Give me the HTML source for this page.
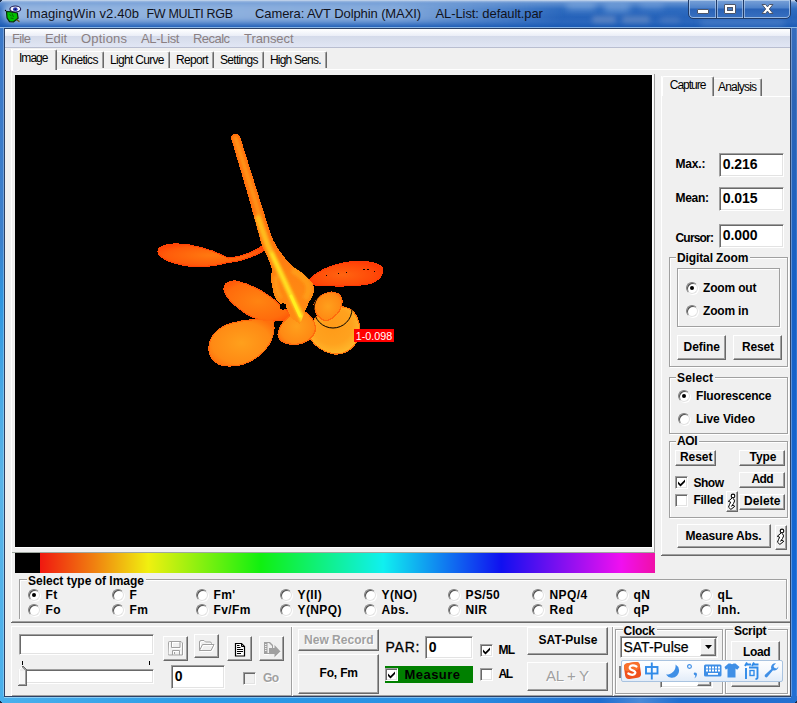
<!DOCTYPE html>
<html><head><meta charset="utf-8">
<style>
*{box-sizing:border-box;margin:0;padding:0}
html,body{width:797px;height:703px;overflow:hidden;background:#3f97dd}
body{font-family:"Liberation Sans",sans-serif;font-size:12px;color:#000;position:relative}
.a{position:absolute}
.t{position:absolute;white-space:nowrap;line-height:1}
.tt{top:8px;font-size:13px;color:#10121c}
.btn{position:absolute;background:#f0f0f0;border:1px solid;border-color:#fff #696969 #696969 #fff;box-shadow:inset -1px -1px 0 #a0a0a0, inset 1px 1px 0 #f0f0f0}
.edit{position:absolute;background:#fff;border:1px solid;border-color:#a0a0a0 #fff #fff #a0a0a0;box-shadow:inset 1px 1px 0 #696969, inset -1px -1px 0 #e3e3e3}
.grp{position:absolute;border:1px solid #a0a0a0;box-shadow:1px 1px 0 #fff, inset 1px 1px 0 #fff}
.rad{position:absolute;width:12px;height:12px;border-radius:50%;background:#fff;border:1px solid;border-color:#808080 #e3e3e3 #e3e3e3 #808080;box-shadow:inset 1px 1px 0 #505050, 1px 1px 0 #fff}
.rad.on:after{content:"";position:absolute;left:3px;top:3px;width:4px;height:4px;background:#000;border-radius:50%}
.chk{position:absolute;width:13px;height:13px;background:#fff;border:1px solid;border-color:#a0a0a0 #fff #fff #a0a0a0;box-shadow:inset 1px 1px 0 #696969, inset -1px -1px 0 #e3e3e3}
.dis{color:#a0a0a0;text-shadow:1px 1px 0 #fff}
.gl{background:#f0f0f0;padding:0 2px 0 1px;margin-left:-1px}
</style></head><body>
<div class="a" style="left:0px;top:0px;width:797px;height:703px;background:#3a80d0"></div>
<div class="a" style="left:0px;top:0px;width:5px;height:703px;background:linear-gradient(180deg,#4a7fc6 0,#3b78c8 30px,#3c80cc 240px,#2f96e0 300px,#4aaae6 400px,#5ab4e8 480px,#4ab0ec 703px)"></div>
<div class="a" style="left:3px;top:28px;width:1px;height:669px;background:rgba(255,255,255,.28)"></div>
<div class="a" style="left:790px;top:0px;width:7px;height:703px;background:linear-gradient(180deg,#3a70c0 0,#2c64b6 100px,#1560c6 300px,#1467d4 600px,#2270d4 703px)"></div>
<div class="a" style="left:791px;top:28px;width:1px;height:669px;background:rgba(255,255,255,.3)"></div>
<div class="a" style="left:796px;top:20px;width:1px;height:683px;background:rgba(255,255,255,.12)"></div>
<div class="a" style="left:0px;top:696px;width:797px;height:7px;background:linear-gradient(90deg,#4ab0ec 0,#2b9be6 200px,#2a8fe2 450px,#1f6ed0 600px,#4a8ad8 640px,#1f6ed0 680px,#2470d0 797px)"></div>
<div class="a" style="left:4px;top:697px;width:787px;height:1px;background:rgba(255,255,255,.4)"></div>
<div class="a" style="left:0px;top:0px;width:797px;height:28px;background:linear-gradient(180deg,#dfe8f4 0,#9cb9e0 1px,#5f8fd0 3px,#2f6cc0 9px,#2663ba 17px,#2a66bc 22px,#1c5cb6 26.500px,#8ab6e6 27px,#8ab6e6 28px)"></div>
<div class="a" style="left:2px;top:3px;width:560px;height:20px;border-radius:10px;background:linear-gradient(90deg,rgba(178,202,233,.8) 0,rgba(165,194,230,.75) 70%,rgba(130,170,220,.35) 90%,rgba(100,150,210,0) 100%);filter:blur(3px)"></div>
<div class="a" style="left:566px;top:2px;width:30px;height:8px;border-radius:4px;background:rgba(150,185,230,.5);filter:blur(3px)"></div>
<div class="a" style="left:604px;top:3px;width:26px;height:9px;border-radius:4px;background:rgba(150,185,230,.5);filter:blur(3px)"></div>
<div class="a" style="left:640px;top:2px;width:24px;height:7px;border-radius:4px;background:rgba(140,178,228,.4);filter:blur(3px)"></div>
<div class="a" style="left:592px;top:16px;width:24px;height:7px;border-radius:3px;background:rgba(130,155,200,.55);filter:blur(2.500px)"></div>
<div class="a" style="left:622px;top:16px;width:28px;height:7px;border-radius:3px;background:rgba(130,155,200,.5);filter:blur(2.500px)"></div>
<div class="a" style="left:660px;top:17px;width:20px;height:6px;border-radius:3px;background:rgba(120,150,200,.35);filter:blur(2.500px)"></div>
<div class="a" style="left:700px;top:20px;width:85px;height:6px;border-radius:3px;background:rgba(120,160,215,.4);filter:blur(3px)"></div>
<div class="a" style="left:0px;top:0px;width:2px;height:1px;background:#1a2c4a"></div>
<div class="a" style="left:0px;top:1px;width:1px;height:1px;background:#1a2c4a"></div>
<div class="a" style="left:795px;top:0px;width:2px;height:1px;background:#1a2c4a"></div>
<div class="a" style="left:796px;top:1px;width:1px;height:1px;background:#1a2c4a"></div>
<div class="a" style="left:0px;top:702px;width:2px;height:1px;background:#1a2c4a"></div>
<div class="a" style="left:0px;top:701px;width:1px;height:1px;background:#1a2c4a"></div>
<div class="a" style="left:795px;top:702px;width:2px;height:1px;background:#1a2c4a"></div>
<div class="a" style="left:796px;top:701px;width:1px;height:1px;background:#1a2c4a"></div>
<div class="a" style="left:4px;top:28px;width:787px;height:669px;background:#2b4166"></div>
<div class="a" style="left:5px;top:29px;width:785px;height:667px;background:#f0f0f0"></div>
<div class="t " style="left:26.0px;top:6.7px;font-size:13px;letter-spacing:0.11px;font-weight:normal;color:#10121c;">ImagingWin v2.40b</div>
<div class="t " style="left:146.5px;top:8.0px;font-size:12.5px;letter-spacing:-0.32px;font-weight:normal;color:#10121c;">FW MULTI RGB</div>
<div class="t " style="left:255.0px;top:6.7px;font-size:13px;letter-spacing:-0.10px;font-weight:normal;color:#10121c;">Camera: AVT Dolphin (MAXI)</div>
<div class="t " style="left:435.5px;top:6.7px;font-size:13px;letter-spacing:-0.09px;font-weight:normal;color:#10121c;">AL-List: default.par</div>
<div class="a" style="left:688px;top:-1px;width:103px;height:20px;border:1px solid #1f3a68;border-radius:0 0 5px 5px;box-shadow:inset 0 0 0 1px rgba(190,212,240,.7);background:linear-gradient(180deg,#7aa2d8 0,#4e82ca 8px,#2a62b6 9px,#3a72c2 19px)"></div>
<div class="a" style="left:716px;top:0px;width:1px;height:18px;background:#1f3a68;box-shadow:1px 0 0 rgba(190,212,240,.6),-1px 0 0 rgba(190,212,240,.6)"></div>
<div class="a" style="left:743px;top:0px;width:1px;height:18px;background:#1f3a68;box-shadow:1px 0 0 rgba(190,212,240,.6),-1px 0 0 rgba(190,212,240,.6)"></div>
<div class="a" style="left:697px;top:9px;width:12px;height:5px;background:#fff;border:1px solid #4d566a;border-radius:1px"></div>
<div class="a" style="left:724px;top:4px;width:12px;height:10px;background:#fff;border:1px solid #4d566a;border-radius:1px"></div>
<div class="a" style="left:727px;top:7px;width:6px;height:4px;background:#4c7cc0;border:1px solid #4d566a"></div>
<svg class="a" style="left:760px;top:3px" width="15" height="12" viewBox="0 0 15 12"><path d="M2 1.500h3.600l1.900 2.400 1.900-2.400h3.600l-3.700 4.500 3.700 4.500h-3.600l-1.900-2.400-1.900 2.400h-3.600l3.700-4.500z" fill="#fff" stroke="#4d566a" stroke-width="1" stroke-linejoin="round"/></svg>
<svg class="a" style="left:4px;top:5px" width="19" height="19" viewBox="4 5 19 19"><path d="M6.500 11.500l5 .3 5.800 1.200.8 5.200-4.800 3.800-3.800-.4-2.500-3.800z" fill="#00c000" stroke="#062a06" stroke-width="1.200" stroke-linejoin="round"/><path d="M9.500 14.500l2 1.500M12 13.500l1.500 3.500M10.500 18l3 .5" stroke="#0a5a0a" stroke-width=".9" fill="none"/><path d="M16.500 19.800l3 1.800" stroke="#6a5010" stroke-width="1.300"/><circle cx="5.500" cy="10.500" r=".7" fill="#000"/><ellipse cx="15.300" cy="9" rx="5.400" ry="3" fill="#f4f4fc" stroke="#1c1850" stroke-width="1.100"/><ellipse cx="15.300" cy="9.200" rx="2.300" ry="1.900" fill="#2838b8"/><circle cx="15.300" cy="9.300" r=".8" fill="#10103a"/></svg>
<div class="a" style="left:5px;top:29px;width:785px;height:19px;background:linear-gradient(180deg,#fff 0,#f6f8fc 3px,#eaedf6 7px,#d4daea 7px,#dae0ee 12px,#e1e6f4 18px,#b9bed0 18px,#b9bed0 19px)"></div>
<div class="t " style="left:12.0px;top:32.0px;font-size:13px;letter-spacing:-0.65px;font-weight:normal;color:#8a7f82;">File</div>
<div class="t " style="left:45.0px;top:32.0px;font-size:13px;letter-spacing:-0.13px;font-weight:normal;color:#8a7f82;">Edit</div>
<div class="t " style="left:81.0px;top:32.0px;font-size:13px;letter-spacing:0.20px;font-weight:normal;color:#8a7f82;">Options</div>
<div class="t " style="left:141.0px;top:32.0px;font-size:13px;letter-spacing:-0.33px;font-weight:normal;color:#8a7f82;">AL-List</div>
<div class="t " style="left:193.0px;top:32.0px;font-size:13px;letter-spacing:-0.55px;font-weight:normal;color:#8a7f82;">Recalc</div>
<div class="t " style="left:244.0px;top:32.0px;font-size:13px;letter-spacing:-0.08px;font-weight:normal;color:#8a7f82;">Transect</div>
<div class="a" style="left:11px;top:69px;width:779px;height:1px;background:#fff"></div>
<div class="a" style="left:11px;top:49px;width:1px;height:574px;background:#fff"></div>
<div class="a" style="left:11px;top:622px;width:779px;height:1px;background:#696969"></div>
<div class="a" style="left:12px;top:621px;width:778px;height:1px;background:#a0a0a0"></div>
<div class="a" style="left:12px;top:49px;width:45px;height:21px;background:#f0f0f0;border-top:1px solid #fff;border-left:1px solid #fff;border-right:1px solid #696969;box-shadow:inset -1px 0 0 #a0a0a0;border-radius:2px 2px 0 0"></div>
<div class="t " style="left:19.0px;top:52.1px;font-size:12px;letter-spacing:-0.96px;font-weight:normal;">Image</div>
<div class="a" style="left:57px;top:51px;width:47px;height:17px;border-top:1px solid #fff;border-right:1px solid #696969;box-shadow:inset -1px 0 0 #a0a0a0;border-radius:0 2px 0 0"></div>
<div class="t " style="left:61.0px;top:53.8px;font-size:12px;letter-spacing:-0.65px;font-weight:normal;">Kinetics</div>
<div class="a" style="left:104px;top:51px;width:66px;height:17px;border-top:1px solid #fff;border-right:1px solid #696969;box-shadow:inset -1px 0 0 #a0a0a0;border-radius:0 2px 0 0"></div>
<div class="t " style="left:110.0px;top:53.8px;font-size:12px;letter-spacing:-0.69px;font-weight:normal;">Light Curve</div>
<div class="a" style="left:170px;top:51px;width:44px;height:17px;border-top:1px solid #fff;border-right:1px solid #696969;box-shadow:inset -1px 0 0 #a0a0a0;border-radius:0 2px 0 0"></div>
<div class="t " style="left:176.0px;top:53.8px;font-size:12px;letter-spacing:-0.70px;font-weight:normal;">Report</div>
<div class="a" style="left:214px;top:51px;width:50px;height:17px;border-top:1px solid #fff;border-right:1px solid #696969;box-shadow:inset -1px 0 0 #a0a0a0;border-radius:0 2px 0 0"></div>
<div class="t " style="left:220.0px;top:53.8px;font-size:12px;letter-spacing:-0.69px;font-weight:normal;">Settings</div>
<div class="a" style="left:264px;top:51px;width:63px;height:17px;border-top:1px solid #fff;border-right:1px solid #696969;box-shadow:inset -1px 0 0 #a0a0a0;border-radius:0 2px 0 0"></div>
<div class="t " style="left:270.0px;top:53.8px;font-size:12px;letter-spacing:-0.80px;font-weight:normal;">High Sens.</div>
<div class="a" style="left:654px;top:74px;width:1px;height:479px;background:#a0a0a0"></div>
<div class="a" style="left:12px;top:552px;width:643px;height:1px;background:#a0a8a0"></div>
<div class="a" style="left:652px;top:75px;width:1px;height:473px;background:#fff"></div>
<div class="a" style="left:15px;top:547px;width:638px;height:1px;background:#fff"></div>
<div class="a" style="left:653px;top:75px;width:1px;height:477px;background:#f8f8f8"></div>
<div class="a" style="left:15px;top:75px;width:637px;height:472px;background:#000"></div>
<svg class="a" style="left:15px;top:75px" width="637" height="472" viewBox="15 75 637 472" shape-rendering="crispEdges">
<defs>
<radialGradient id="gL" cx="50%" cy="50%" r="60%"><stop offset="0" stop-color="#ff7a10"/><stop offset=".7" stop-color="#ff5c0a"/><stop offset="1" stop-color="#ff4205"/></radialGradient>
<radialGradient id="gR" cx="45%" cy="55%" r="60%"><stop offset="0" stop-color="#ff6410"/><stop offset=".7" stop-color="#ff4a08"/><stop offset="1" stop-color="#ff3a05"/></radialGradient>
<radialGradient id="gM" cx="50%" cy="50%" r="60%"><stop offset="0" stop-color="#ff8412"/><stop offset=".8" stop-color="#ff6c0c"/><stop offset="1" stop-color="#ff5a08"/></radialGradient>
<radialGradient id="gB" cx="50%" cy="50%" r="60%"><stop offset="0" stop-color="#ffa01c"/><stop offset=".75" stop-color="#ff8a14"/><stop offset="1" stop-color="#ff700c"/></radialGradient>
<radialGradient id="gY" cx="45%" cy="40%" r="65%"><stop offset="0" stop-color="#ff9a18"/><stop offset=".6" stop-color="#ffa21e"/><stop offset=".9" stop-color="#ffb62a"/><stop offset="1" stop-color="#ff9018"/></radialGradient>
<linearGradient id="gS" x1="0" y1="0" x2="1" y2="0"><stop offset="0" stop-color="#ff5a08"/><stop offset=".5" stop-color="#ff8c14"/><stop offset="1" stop-color="#ff5a08"/></linearGradient>
<filter id="bl" x="-20%" y="-20%" width="140%" height="140%"><feGaussianBlur stdDeviation="1.6"/></filter>
<linearGradient id="gS2" gradientUnits="userSpaceOnUse" x1="235" y1="134" x2="300" y2="324"><stop offset="0" stop-color="#ff6c0c"/><stop offset=".55" stop-color="#ff720e"/><stop offset=".75" stop-color="#ff8412"/><stop offset="1" stop-color="#ff8c14"/></linearGradient>
<clipPath id="cb"><path d="M231 138Q231 134 235.500 134Q240 134 240.500 138L259 197L271 235Q277 250 292 266Q307 275 313 284Q316 293 309 302L304 314L300 324L291 318Q288 306 279 303Q273 296 272.500 288Q270 278 272 270Q268 256 262 246L248.500 197Z"/></clipPath>
</defs>
<!-- left leaf + petiole -->
<path d="M158 251Q159 244 178 244Q203 245 228 258Q246 257 262 246L265 250Q246 261 228 262.500Q200 270 178 264Q158 259 158 251Z" fill="url(#gL)" stroke="#ff4606" stroke-width="1.200"/>
<!-- left-middle leaf -->
<path d="M224 289Q224 281 236 281Q262 287 282 307L292 314L292 320L283 320Q262 324 245 313Q225 299 224 289Z" fill="url(#gM)" stroke="#ff560a" stroke-width="1.200"/>
<!-- bottom-left leaf -->
<path d="M209 350Q208 334 226 325Q250 317 273 321Q277 335 265 350Q250 366 230 366Q211 366 209 350Z" fill="url(#gB)" stroke="#ff6a0c" stroke-width="1.200"/>
<!-- right leaf -->
<path d="M310 279Q322 267 345 262.500Q372 259 382 267Q385 277 372 283Q360 286 340 286L316 285.500Q310 283 310 279Z" fill="url(#gR)" stroke="#ff3c06" stroke-width="1.200"/>
<!-- big right-bottom leaf -->
<path d="M310 338Q308 322 322 312Q340 302 353 311Q363 324 358 339Q350 355 334 354Q318 351 310 338Z" fill="url(#gY)" stroke="#ff7a10" stroke-width="1.200"/>
<!-- small leaf under circle -->
<path d="M314 304Q318 294 331 292Q343 293 342 303Q340 316 326 321Q315 318 314 304Z" fill="url(#gB)" stroke="#ff6a0c" stroke-width="1.200"/>
<!-- centre-bottom leaf -->
<path d="M278 335Q279 324 290 316L298 308L308 314Q317 322 315 332Q309 344 294 344.500Q280 344 278 335Z" fill="url(#gB)" stroke="#ff6a0c" stroke-width="1.200"/>
<!-- stem + body -->
<path d="M231 138Q231 134 235.500 134Q240 134 240.500 138L259 197L271 235Q277 250 292 266Q307 275 313 284Q316 293 309 302L304 314L300 324L291 318Q288 306 279 303Q273 296 272.500 288Q270 278 272 270Q268 256 262 246L248.500 197Z" fill="url(#gS2)"/>
<!-- stem highlight -->
<g clip-path="url(#cb)"><g filter="url(#bl)" shape-rendering="auto">
<path d="M235.500 138L254 197L267 242L283 278L295 304L304 322" fill="none" stroke="#ff9416" stroke-width="4.500" stroke-linecap="round"/>
<path d="M258 218L268 246L283 278L295 304L303 320" fill="none" stroke="#ffbc1c" stroke-width="6" stroke-linecap="round"/>
<path d="M272 254L283 278L295 304L303 320" fill="none" stroke="#ffe420" stroke-width="4" stroke-linecap="round"/>
<path d="M292 270Q302 275 308 284Q310 292 305 299" fill="none" stroke="#ff9c18" stroke-width="6"/>
<path d="M276 276Q275 290 281 298" fill="none" stroke="#ff9a18" stroke-width="4"/>
</g></g>
<path d="M291 296L300 316" fill="none" stroke="#fff020" stroke-width="3" stroke-linecap="round" shape-rendering="auto"/>
<circle cx="283" cy="306.500" r="3.200" fill="#000"/>
<!-- dots on right leaf -->
<g fill="#000"><rect x="338" y="273" width="1" height="1"/><rect x="346" y="272" width="1" height="1"/><rect x="363" y="269" width="2" height="1"/><rect x="367" y="269" width="2" height="1"/><rect x="374" y="271" width="1" height="1"/><rect x="326" y="275" width="1" height="1"/></g>
<!-- AOI circle -->
<circle cx="333" cy="309" r="19" fill="none" stroke="#000" stroke-width="1" shape-rendering="auto"/>
<!-- label -->
<rect x="354" y="329" width="40" height="13" fill="#ff0000"/>
<text x="355.800" y="339.800" font-family="Liberation Sans, sans-serif" font-size="11" fill="#fff" textLength="36.500" shape-rendering="auto" lengthAdjust="spacingAndGlyphs">1-0.098</text>
</svg>

<div class="a" style="left:15px;top:553px;width:25px;height:20px;background:#000"></div>
<div class="a" style="left:40px;top:553px;width:615px;height:20px;background:linear-gradient(90deg,#f01810 0,#f08010 8.8%,#f0f010 17.6%,#80f010 26.7%,#10f010 35.9%,#10f080 45.8%,#10f0f0 55.8%,#1080f0 65.4%,#1010f0 75%,#8010f0 84.7%,#f010f0 94.5%,#f010a8 100%)"></div>
<div class="a" style="left:714px;top:96px;width:76px;height:1px;background:#fff"></div>
<div class="a" style="left:661px;top:76px;width:1px;height:480px;background:#fff"></div>
<div class="a" style="left:661px;top:555px;width:129px;height:1px;background:#696969"></div>
<div class="a" style="left:662px;top:554px;width:128px;height:1px;background:#a0a0a0"></div>
<div class="a" style="left:662px;top:76px;width:52px;height:20px;background:#f0f0f0;border-top:1px solid #fff;border-left:1px solid #fff;border-right:1px solid #696969;box-shadow:inset -1px 0 0 #a0a0a0;border-radius:2px 2px 0 0"></div>
<div class="t " style="left:669.8px;top:78.8px;font-size:12px;letter-spacing:-1.03px;font-weight:normal;">Capture</div>
<div class="a" style="left:714px;top:78px;width:48px;height:18px;border-top:1px solid #fff;border-right:1px solid #696969;box-shadow:inset -1px 0 0 #a0a0a0;border-radius:0 2px 0 0"></div>
<div class="t " style="left:718.0px;top:80.8px;font-size:12px;letter-spacing:-0.81px;font-weight:normal;">Analysis</div>
<div class="t " style="left:675.5px;top:157.8px;font-size:12px;letter-spacing:-0.17px;font-weight:bold;">Max.:</div>
<div class="t " style="left:675.5px;top:191.8px;font-size:12px;letter-spacing:-0.29px;font-weight:bold;">Mean:</div>
<div class="t " style="left:675.5px;top:231.8px;font-size:12px;letter-spacing:-0.81px;font-weight:bold;">Cursor:</div>
<div class="edit" style="left:719px;top:153px;width:65px;height:24px;"></div>
<div class="t " style="left:722.7px;top:156.8px;font-size:14px;letter-spacing:-0.06px;font-weight:bold;">0.216</div>
<div class="edit" style="left:719px;top:187px;width:65px;height:24px;"></div>
<div class="t " style="left:722.7px;top:190.8px;font-size:14px;letter-spacing:-0.06px;font-weight:bold;">0.015</div>
<div class="edit" style="left:719px;top:224px;width:65px;height:24px;"></div>
<div class="t " style="left:722.7px;top:227.8px;font-size:14px;letter-spacing:-0.06px;font-weight:bold;">0.000</div>
<div class="grp" style="left:669px;top:257px;width:119px;height:110px;"></div>
<div class="t gl" style="left:677.0px;top:251.8px;font-size:12px;letter-spacing:-0.11px;font-weight:bold;">Digital Zoom</div>
<div class="grp" style="left:677px;top:268px;width:103px;height:59px;"></div>
<div class="rad on" style="left:686px;top:282px"></div>
<div class="t " style="left:703.0px;top:281.8px;font-size:12px;letter-spacing:-0.16px;font-weight:bold;">Zoom out</div>
<div class="rad" style="left:686px;top:305px"></div>
<div class="t " style="left:703.0px;top:304.8px;font-size:12px;letter-spacing:-0.19px;font-weight:bold;">Zoom in</div>
<div class="btn" style="left:677px;top:335px;width:49px;height:25px;"></div>
<div class="t " style="left:683.5px;top:340.8px;font-size:12px;letter-spacing:-0.03px;font-weight:bold;">Define</div>
<div class="btn" style="left:733px;top:335px;width:49px;height:25px;"></div>
<div class="t " style="left:742.0px;top:340.8px;font-size:12px;letter-spacing:-0.17px;font-weight:bold;">Reset</div>
<div class="grp" style="left:669px;top:377px;width:119px;height:57px;"></div>
<div class="t gl" style="left:677.0px;top:371.8px;font-size:12px;letter-spacing:0.13px;font-weight:bold;">Select</div>
<div class="rad on" style="left:678px;top:390px"></div>
<div class="t " style="left:696.0px;top:389.8px;font-size:12px;letter-spacing:-0.17px;font-weight:bold;">Fluorescence</div>
<div class="rad" style="left:678px;top:413px"></div>
<div class="t " style="left:696.0px;top:412.8px;font-size:12px;letter-spacing:-0.09px;font-weight:bold;">Live Video</div>
<div class="grp" style="left:669px;top:441px;width:119px;height:77px;"></div>
<div class="t gl" style="left:677.0px;top:435.3px;font-size:12px;letter-spacing:-0.42px;font-weight:bold;">AOI</div>
<div class="btn" style="left:675px;top:450px;width:41px;height:16px;"></div>
<div class="t " style="left:680.0px;top:450.8px;font-size:12px;letter-spacing:-0.05px;font-weight:bold;">Reset</div>
<div class="btn" style="left:739px;top:450px;width:46px;height:16px;"></div>
<div class="t " style="left:749.5px;top:450.8px;font-size:12px;letter-spacing:-0.04px;font-weight:bold;">Type</div>
<div class="btn" style="left:739px;top:472px;width:46px;height:16px;"></div>
<div class="t " style="left:751.5px;top:472.8px;font-size:12px;letter-spacing:-0.66px;font-weight:bold;">Add</div>
<div class="btn" style="left:739px;top:494px;width:46px;height:16px;"></div>
<div class="t " style="left:744.0px;top:494.8px;font-size:12px;letter-spacing:0.10px;font-weight:bold;">Delete</div>
<div class="chk" style="left:675px;top:476px;"><svg width="13" height="13" viewBox="0 0 13 13" style="position:absolute;left:-1px;top:-1px"><path d="M3 5.5l2.5 2.5 4.5-4.5v2.6l-4.5 4.5-2.5-2.5z" fill="#000"/></svg></div>
<div class="t " style="left:693.5px;top:476.8px;font-size:12px;letter-spacing:-0.50px;font-weight:bold;">Show</div>
<div class="chk" style="left:675px;top:494px;"></div>
<div class="t " style="left:693.5px;top:494.3px;font-size:12px;letter-spacing:-0.27px;font-weight:bold;">Filled</div>
<div class="btn" style="left:726px;top:491px;width:12px;height:21px;"></div>
<svg class="a" style="left:726px;top:491px" width="12" height="21" viewBox="0 0 12 21"><circle cx="7" cy="4.900" r="1.800" fill="#fff" stroke="#000" stroke-width="1.100"/><path d="M6.400 6.800L2.300 10.300L4.700 11.200L3.600 13.300L2.500 16.200L4.900 18.400L8.800 15.300L6.700 14.200L5.600 15.300L7.500 12.500L8.600 9.900L7.500 7.700Z" fill="#fff" stroke="#000" stroke-width="1" stroke-linejoin="round"/></svg>
<div class="btn" style="left:677px;top:524px;width:94px;height:24px;"></div>
<div class="t " style="left:685.5px;top:529.8px;font-size:12px;letter-spacing:-0.14px;font-weight:bold;">Measure Abs.</div>
<div class="btn" style="left:775px;top:525px;width:12px;height:25px;"></div>
<svg class="a" style="left:775px;top:526px" width="12" height="21" viewBox="0 0 12 21"><circle cx="7" cy="4.900" r="1.800" fill="#fff" stroke="#000" stroke-width="1.100"/><path d="M6.400 6.800L2.300 10.300L4.700 11.200L3.600 13.300L2.500 16.200L4.900 18.400L8.800 15.300L6.700 14.200L5.600 15.300L7.500 12.500L8.600 9.900L7.500 7.700Z" fill="#fff" stroke="#000" stroke-width="1" stroke-linejoin="round"/></svg>
<div class="a" style="left:19px;top:579px;width:768px;height:40px;border:1px solid #a0a0a0;border-bottom:none;box-shadow:1px 0 0 #fff, inset 1px 1px 0 #fff"></div>
<div class="t gl" style="left:28.0px;top:574.8px;font-size:12px;letter-spacing:-0.00px;font-weight:bold;">Select type of Image</div>
<div class="rad on" style="left:28px;top:589px"></div>
<div class="t " style="left:45.5px;top:589.1px;font-size:12px;font-weight:bold;letter-spacing:.4px;">Ft</div>
<div class="rad" style="left:28px;top:604px"></div>
<div class="t " style="left:45.5px;top:604.1px;font-size:12px;font-weight:bold;letter-spacing:.4px;">Fo</div>
<div class="rad" style="left:112px;top:589px"></div>
<div class="t " style="left:129.5px;top:589.1px;font-size:12px;font-weight:bold;letter-spacing:.4px;">F</div>
<div class="rad" style="left:112px;top:604px"></div>
<div class="t " style="left:129.5px;top:604.1px;font-size:12px;font-weight:bold;letter-spacing:.4px;">Fm</div>
<div class="rad" style="left:196px;top:589px"></div>
<div class="t " style="left:213.5px;top:589.1px;font-size:12px;font-weight:bold;letter-spacing:.4px;">Fm'</div>
<div class="rad" style="left:196px;top:604px"></div>
<div class="t " style="left:213.5px;top:604.1px;font-size:12px;font-weight:bold;letter-spacing:.4px;">Fv/Fm</div>
<div class="rad" style="left:280px;top:589px"></div>
<div class="t " style="left:297.5px;top:589.1px;font-size:12px;font-weight:bold;letter-spacing:.4px;">Y(II)</div>
<div class="rad" style="left:280px;top:604px"></div>
<div class="t " style="left:297.5px;top:604.1px;font-size:12px;font-weight:bold;letter-spacing:.4px;">Y(NPQ)</div>
<div class="rad" style="left:364px;top:589px"></div>
<div class="t " style="left:381.5px;top:589.1px;font-size:12px;font-weight:bold;letter-spacing:.4px;">Y(NO)</div>
<div class="rad" style="left:364px;top:604px"></div>
<div class="t " style="left:381.5px;top:604.1px;font-size:12px;font-weight:bold;letter-spacing:.4px;">Abs.</div>
<div class="rad" style="left:448px;top:589px"></div>
<div class="t " style="left:465.5px;top:589.1px;font-size:12px;font-weight:bold;letter-spacing:.4px;">PS/50</div>
<div class="rad" style="left:448px;top:604px"></div>
<div class="t " style="left:465.5px;top:604.1px;font-size:12px;font-weight:bold;letter-spacing:.4px;">NIR</div>
<div class="rad" style="left:532px;top:589px"></div>
<div class="t " style="left:549.5px;top:589.1px;font-size:12px;font-weight:bold;letter-spacing:.4px;">NPQ/4</div>
<div class="rad" style="left:532px;top:604px"></div>
<div class="t " style="left:549.5px;top:604.1px;font-size:12px;font-weight:bold;letter-spacing:.4px;">Red</div>
<div class="rad" style="left:616px;top:589px"></div>
<div class="t " style="left:633.5px;top:589.1px;font-size:12px;font-weight:bold;letter-spacing:.4px;">qN</div>
<div class="rad" style="left:616px;top:604px"></div>
<div class="t " style="left:633.5px;top:604.1px;font-size:12px;font-weight:bold;letter-spacing:.4px;">qP</div>
<div class="rad" style="left:700px;top:589px"></div>
<div class="t " style="left:717.5px;top:589.1px;font-size:12px;font-weight:bold;letter-spacing:.4px;">qL</div>
<div class="rad" style="left:700px;top:604px"></div>
<div class="t " style="left:717.5px;top:604.1px;font-size:12px;font-weight:bold;letter-spacing:.4px;">Inh.</div>
<div class="a" style="left:11px;top:626px;width:779px;height:1px;background:#fff"></div>
<div class="a" style="left:11px;top:695px;width:779px;height:1px;background:#a0a0a0"></div>
<div class="a" style="left:11px;top:626px;width:1px;height:70px;background:#fff"></div>
<div class="a" style="left:291px;top:627px;width:1px;height:69px;background:#a0a0a0"></div>
<div class="a" style="left:292px;top:627px;width:1px;height:69px;background:#fff"></div>
<div class="a" style="left:612px;top:627px;width:1px;height:69px;background:#a0a0a0"></div>
<div class="a" style="left:613px;top:627px;width:1px;height:69px;background:#fff"></div>
<div class="edit" style="left:19px;top:634px;width:135px;height:21px;"></div>
<div class="a" style="left:22px;top:661px;width:1px;height:4px;background:#000"></div>
<div class="a" style="left:149px;top:661px;width:1px;height:4px;background:#000"></div>
<div class="edit" style="left:24px;top:669px;width:130px;height:15px;"></div>
<svg class="a" style="left:18px;top:665px" width="10" height="21" viewBox="0 0 10 21" shape-rendering="crispEdges"><path d="M0 21v-16l4.500-4.500 4.500 4.500v16z" fill="#ececec"/><path d="M1 20v-15l3.500-3.500" fill="none" stroke="#fff" stroke-width="1"/><path d="M2 6h6v14h-6z" fill="#f6f6f6"/><path d="M4.500 1l4 4v15.500h-8.500" fill="none" stroke="#696969" stroke-width="1"/><path d="M4.500 2l3 3v14.500h-6.500" fill="none" stroke="#a0a0a0" stroke-width="1"/></svg>
<div class="btn" style="left:163px;top:636px;width:25px;height:25px;"></div>
<div class="btn" style="left:194px;top:634px;width:25px;height:24px;"></div>
<div class="btn" style="left:227px;top:636px;width:25px;height:25px;"></div>
<div class="btn" style="left:259px;top:636px;width:25px;height:25px;"></div>
<svg class="a" style="left:168px;top:641px" width="16" height="15" viewBox="0 0 16 15"><g fill="none" stroke="#fff" stroke-width="1" transform="translate(1,1)"><path d="M.5 1.500q0-1 1-1h11.500l1.500 1.500v12h-13.500q-1 0-1-1z"/><path d="M3.500.5v6h8.500v-6M4.500 14v-4.500h7v4.500"/></g><g fill="none" stroke="#a0a0a0" stroke-width="1"><path d="M.5 1.500q0-1 1-1h11.500l1.500 1.500v12h-13.500q-1 0-1-1z"/><path d="M3.500.5v6h8.500v-6M4.500 14v-4.500h7v4.500M6.500 11v2"/></g></svg>
<svg class="a" style="left:199px;top:640px" width="17" height="12" viewBox="0 0 17 12"><g fill="none" stroke="#fff" stroke-width="1" transform="translate(1,1)"><path d="M.5 10.500v-8.500q0-1.500 1.500-1.500h3l1.500 1.500h4.500q1.500 0 1.500 1.500v1M.5 10.500l3-6h11.500l-3 6z"/></g><g fill="none" stroke="#a0a0a0" stroke-width="1"><path d="M.5 10.500v-8.500q0-1.500 1.500-1.500h3l1.500 1.500h4.500q1.500 0 1.500 1.500v1M.5 10.500l3-6h11.500l-3 6z"/></g></svg>
<svg class="a" style="left:234px;top:642px" width="12" height="15" viewBox="234 642 12 15"><path d="M235.500 643.500h6l3 3v9.500h-9z" fill="#fff" stroke="#000" stroke-width="1.200"/><path d="M241.500 643.500v3h3" fill="none" stroke="#000" stroke-width="1"/><path d="M237 645.500h2.500M237 647.500h3.500M237 649.500h6M237 651.500h6M237 653.500h4" stroke="#000" stroke-width="1"/></svg>
<svg class="a" style="left:263px;top:641px" width="19" height="17" viewBox="263 641 19 17"><path d="M264 642h6l3 3v9h-9z" fill="#a0a0a0"/><path d="M267.500 643v10h4.500v-7l-3-3z" fill="#f0f0f0"/><path d="M265 644.500h1.500M265 646.500h1.500M265 648.500h1.500M265 650.500h1.500" stroke="#f0f0f0" stroke-width="1"/><path d="M269 648h5.500v-3l6 6.500-6 6v-3.500h-5.500z" fill="#a0a0a0"/><path d="M264 654.500h5M275 657.500l5.500-5.500" stroke="#fff" stroke-width="1" fill="none"/></svg>

<div class="edit" style="left:171px;top:665px;width:54px;height:24px;"></div>
<div class="t " style="left:174.8px;top:668.7px;font-size:14px;font-weight:bold;">0</div>
<div class="chk" style="left:243px;top:672px;background:#f0f0f0;"></div>
<div class="t dis" style="left:263.0px;top:672.3px;font-size:12px;letter-spacing:-0.66px;font-weight:bold;">Go</div>
<div class="btn" style="left:298px;top:629px;width:81px;height:22px;"></div>
<div class="t dis" style="left:304.0px;top:633.8px;font-size:12px;letter-spacing:0.02px;font-weight:bold;">New Record</div>
<div class="btn" style="left:298px;top:654px;width:81px;height:40px;"></div>
<div class="t " style="left:319.5px;top:667.3px;font-size:12px;letter-spacing:-0.17px;font-weight:bold;">Fo, Fm</div>
<div class="t " style="left:385.5px;top:639.7px;font-size:14px;letter-spacing:0.79px;font-weight:normal;-webkit-text-stroke:.3px #000;">PAR:</div>
<div class="edit" style="left:425px;top:636px;width:48px;height:23px;"></div>
<div class="t " style="left:428.8px;top:639.8px;font-size:14px;font-weight:bold;">0</div>
<div class="a" style="left:385px;top:666px;width:88px;height:17px;background:#008000"></div>
<div class="chk" style="left:385px;top:668px;"><svg width="13" height="13" viewBox="0 0 13 13" style="position:absolute;left:-1px;top:-1px"><path d="M3 5.5l2.5 2.5 4.5-4.5v2.6l-4.5 4.5-2.5-2.5z" fill="#000"/></svg></div>
<div class="t " style="left:404.5px;top:667.6px;font-size:13px;letter-spacing:0.46px;font-weight:bold;">Measure</div>
<div class="chk" style="left:480px;top:644px;"><svg width="13" height="13" viewBox="0 0 13 13" style="position:absolute;left:-1px;top:-1px"><path d="M3 5.5l2.5 2.5 4.5-4.5v2.6l-4.5 4.5-2.5-2.5z" fill="#000"/></svg></div>
<div class="t " style="left:498.5px;top:644.3px;font-size:12px;letter-spacing:-0.83px;font-weight:bold;">ML</div>
<div class="chk" style="left:480px;top:668px;"></div>
<div class="t " style="left:498.5px;top:667.8px;font-size:12px;letter-spacing:-1.50px;font-weight:bold;">AL</div>
<div class="btn" style="left:527px;top:627px;width:81px;height:28px;"></div>
<div class="t " style="left:538.5px;top:633.8px;font-size:12px;letter-spacing:0.07px;font-weight:bold;">SAT-Pulse</div>
<div class="btn" style="left:527px;top:662px;width:81px;height:29px;"></div>
<div class="t dis" style="left:546.0px;top:668.3px;font-size:15px;letter-spacing:-0.32px;font-weight:normal;">AL + Y</div>
<div class="grp" style="left:615px;top:629px;width:108px;height:65px;"></div>
<div class="t gl" style="left:623.5px;top:625.1px;font-size:12px;letter-spacing:-0.29px;font-weight:bold;">Clock</div>
<div class="grp" style="left:725px;top:629px;width:63px;height:65px;"></div>
<div class="t gl" style="left:734.0px;top:625.1px;font-size:12px;letter-spacing:-0.30px;font-weight:bold;">Script</div>
<div class="edit" style="left:620px;top:636px;width:98px;height:22px;"></div>
<div class="t " style="left:623.5px;top:640.1px;font-size:14px;letter-spacing:-0.01px;font-weight:normal;-webkit-text-stroke:.25px #000;">SAT-Pulse</div>
<div class="btn" style="left:700px;top:638px;width:16px;height:18px;"></div>
<svg class="a" style="left:705px;top:645px" width="7" height="4" viewBox="0 0 7 4"><path d="M0 0h7l-3.500 4z" fill="#000"/></svg>
<div class="btn" style="left:731px;top:641px;width:49px;height:21px;"></div>
<div class="t " style="left:743.0px;top:645.8px;font-size:12px;letter-spacing:-0.39px;font-weight:bold;">Load</div>
<div class="edit" style="left:660px;top:668px;width:53px;height:20px;"></div>
<div class="btn" style="left:697px;top:670px;width:14px;height:16px;"></div>
<div class="btn" style="left:731px;top:666px;width:49px;height:21px;"></div>
<div class="a" style="left:619px;top:666px;width:2px;height:12px;background:#808080"></div>
<div class="a" style="left:621px;top:660px;width:162px;height:22px;border:1px solid #a9c3e0;border-radius:2px;background:linear-gradient(180deg,#fdfeff 0,#f4f8fd 50%,#e2ecf8 100%)"></div>
<svg class="a" style="left:622px;top:660px" width="160" height="22" viewBox="622 660 160 22">
<!-- sogou S -->
<g transform="rotate(-8 632.500 670.500)"><rect x="624.500" y="662.500" width="16" height="16" rx="4" fill="#f0501c"/><rect x="624.500" y="662.500" width="16" height="8" rx="4" fill="#f8702c"/></g>
<path d="M636.500 666.500q-3.500-2-6 -.5-2 2 .8 3.700l2.800 1.300q2.500 1.500 .2 3.300-2.800 1.300-6-.8" fill="none" stroke="#fff" stroke-width="2.200" stroke-linecap="round"/>
<!-- zhong -->
<g fill="none" stroke="#2f8ae8" stroke-width="1.900"><rect x="646" y="667" width="11.500" height="6.500"/><path d="M651.800 662.500v17"/></g>
<!-- moon -->
<path d="M675.500 664.500A7.100 7.100 0 1 1 666 674.500A8.700 8.700 0 0 0 675.500 664.500Z" fill="#3f8fe6"/>
<!-- degree comma -->
<circle cx="689.500" cy="666.500" r="1.900" fill="none" stroke="#3f8fe6" stroke-width="1.200"/>
<path d="M695 672.500q2.200 0 2 2.200-.3 2.400-2.800 3.800 1.500-1.800 1-3.200-1.500-.3-1.500-1.500t1.300-1.300z" fill="#3f8fe6"/>
<!-- keyboard -->
<rect x="704" y="664.500" width="17.500" height="12" rx="1.500" fill="#3f8fe6"/>
<g fill="#fff"><rect x="706" y="666.500" width="2" height="2"/><rect x="709" y="666.500" width="2" height="2"/><rect x="712" y="666.500" width="2" height="2"/><rect x="715" y="666.500" width="2" height="2"/><rect x="718" y="666.500" width="2" height="2"/><rect x="706" y="669.500" width="2" height="2"/><rect x="709" y="669.500" width="2" height="2"/><rect x="712" y="669.500" width="2" height="2"/><rect x="715" y="669.500" width="2" height="2"/><rect x="718" y="669.500" width="2" height="2"/><rect x="708" y="673" width="10" height="1.800"/></g>
<!-- shirt -->
<path d="M724.500 667l4-3.500h2q1.500 1.500 3 0h2l4 3.500-2.300 2.800-1.700-1.300v9h-8v-9l-1.700 1.300z" fill="#3f8fe6"/>
<!-- jian -->
<g fill="none" stroke="#2f8ae8" stroke-width="1.900"><path d="M747 662.500l-2 3.500M746.500 664.500h4.500M754 662.500l-2 3.500M753.500 664.500h5"/><path d="M746 668v11M749 667.500h8.500v10q0 1.500-2 1.500"/><rect x="750" y="670.500" width="4" height="5" stroke-width="1.400"/></g>
<!-- wrench -->
<path d="M778.500 666.500a4.300 4.300 0 0 1-5.500 3.800l-5.500 6.500a1.600 1.600 0 0 1-2.500-2l6.300-5.800a4.300 4.300 0 0 1 4.700-5.700l-2.500 2.700 1 2 2.200.5z" fill="#3f8fe6"/>
</svg>

</body></html>
